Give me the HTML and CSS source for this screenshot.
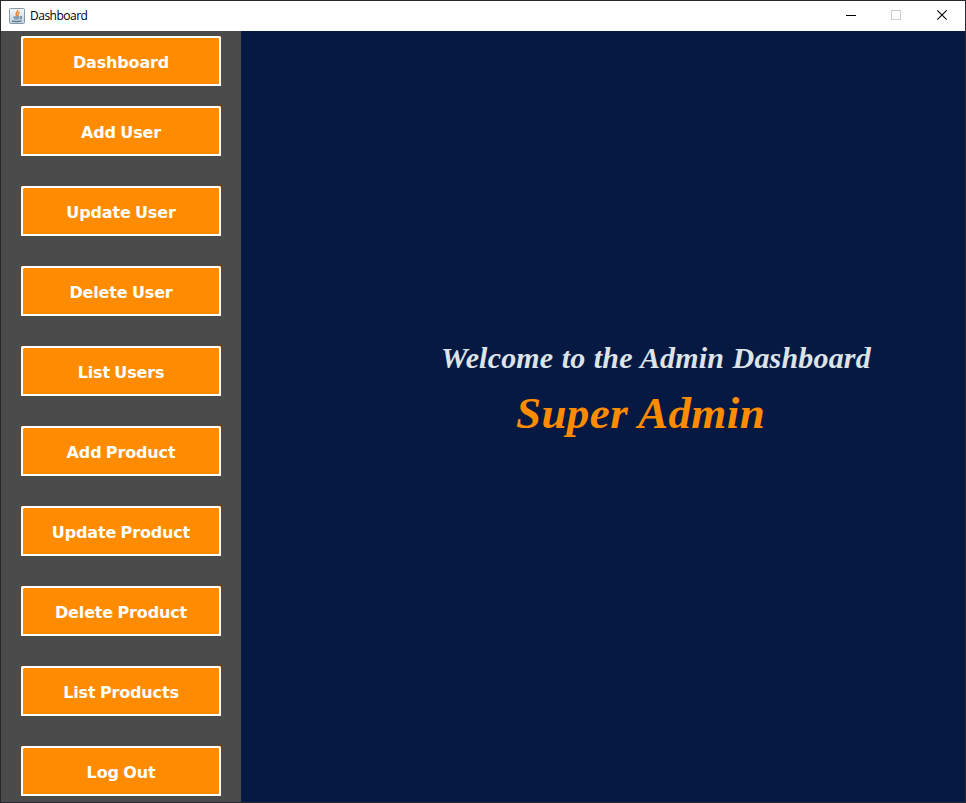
FILE: index.html
```html
<!DOCTYPE html>
<html lang="en">
<head>
<meta charset="utf-8">
<title>Dashboard</title>
<link rel="stylesheet" href="styles.css">
</head>
<body>
<div class="window">
  <header class="titlebar">
    <svg class="app-icon" width="16" height="16" viewBox="0 0 16 16">
      <defs><linearGradient id="tile" x1="0" y1="0" x2="0" y2="1"><stop offset="0" stop-color="#f7f9fa"/><stop offset="1" stop-color="#c3d0d9"/></linearGradient></defs>
      <rect x=".5" y=".5" width="15" height="15" rx="1" fill="url(#tile)" stroke="#8799a7"/>
      <path d="M8.800 1.800C9.500 4 5.400 4.600 7.600 8.200M10.700 4.200C7.800 5.400 9.900 6.300 8.600 8.300" fill="none" stroke="#e8822e" stroke-width="1.400"/>
      <path d="M4.500 9.200h5.800M5 11h4.800M3 12.900c2 1 7 1 9.500-.3M10.800 8.800c2.600-.5 2 1.800 0 2" fill="none" stroke="#4f7898" stroke-width="1.200"/>
    </svg>
    <span class="caption">Dashboard</span>
    <div class="controls">
      <svg width="46" height="30" viewBox="0 0 46 30"><path d="M18 14.500h10" stroke="#000"/></svg>
      <svg width="46" height="30" viewBox="0 0 46 30"><rect x="17.500" y="9.500" width="9" height="9" fill="none" stroke="#ccc"/></svg>
      <svg width="46" height="30" viewBox="0 0 46 30"><path d="M17.300 9.300l9.400 9.400M26.700 9.300l-9.400 9.400" stroke="#000" stroke-width="1.100"/></svg>
    </div>
  </header>
  <div class="content">
    <nav class="sidebar">
      <button class="nav-button">Dashboard</button>
      <button class="nav-button">Add User</button>
      <button class="nav-button">Update User</button>
      <button class="nav-button">Delete User</button>
      <button class="nav-button">List Users</button>
      <button class="nav-button">Add Product</button>
      <button class="nav-button">Update Product</button>
      <button class="nav-button">Delete Product</button>
      <button class="nav-button">List Products</button>
      <button class="nav-button">Log Out</button>
    </nav>
    <main class="welcome">
      <h1 class="greeting">Welcome to the Admin Dashboard</h1>
      <p class="user-name">Super Admin</p>
    </main>
  </div>
</div>
</body>
</html>
```
FILE: styles.css
```css
* { box-sizing: border-box; }
body { margin: 0; }
.window {
  width: 966px;
  height: 803px;
  border: 1px solid #29292d;
  display: flex;
  flex-direction: column;
  overflow: hidden;
}
.titlebar {
  height: 30px;
  flex: none;
  display: flex;
  align-items: center;
  padding-left: 8px;
  background: #fff;
}
.app-icon { margin: -1px 5px 0 0; }
.caption {
  font: 12px/16px "Open Sans", "Noto Sans", sans-serif;
  letter-spacing: -0.5px;
  color: #000;
}
.controls { display: flex; margin: 0 -1px 0 auto; }
.content { flex: 1; display: flex; min-height: 0; }
.sidebar {
  width: 240px;
  flex: none;
  background: #4b4b4b;
  padding: 5px 20px 0;
  display: flex;
  flex-direction: column;
  gap: 30px;
}
/* Bevelled frame: notched outer top corners and a filled inner top-left corner. */
.nav-button {
  width: 200px;
  height: 50px;
  flex: none;
  padding: 3px 0 0;
  border: 0;
  background:
    linear-gradient(#ff8c00, #ff8c00) 0 0 / 1px 1px no-repeat,
    linear-gradient(#ff8c00, #ff8c00) 100% 0 / 1px 1px no-repeat,
    linear-gradient(#fff, #fff) 2px 2px / 1px 1px no-repeat,
    linear-gradient(#ff8c00, #ff8c00) 2px 2px / 196px 46px no-repeat,
    #fff;
  color: #fff;
  font: bold 16px/20px "DejaVu Sans", sans-serif;
  letter-spacing: -0.15px;
  word-spacing: -1px;
}
.nav-button:first-child { margin-bottom: -10px; }
.welcome {
  flex: 1;
  background: #051942;
  padding: 310px 0 0 200px;
  font-family: "Liberation Serif", serif;
  font-weight: bold;
  font-style: italic;
}
.greeting {
  margin: 0;
  font-size: 30px;
  line-height: 34px;
  font-weight: bold;
  letter-spacing: 0.18px;
  word-spacing: 0.7px;
  color: #dce4ea;
  white-space: nowrap;
}
.user-name {
  margin: 12px 0 0 75px;
  font-size: 45px;
  line-height: 52px;
  letter-spacing: 0.4px;
  color: #ff8c00;
  white-space: nowrap;
}
```
